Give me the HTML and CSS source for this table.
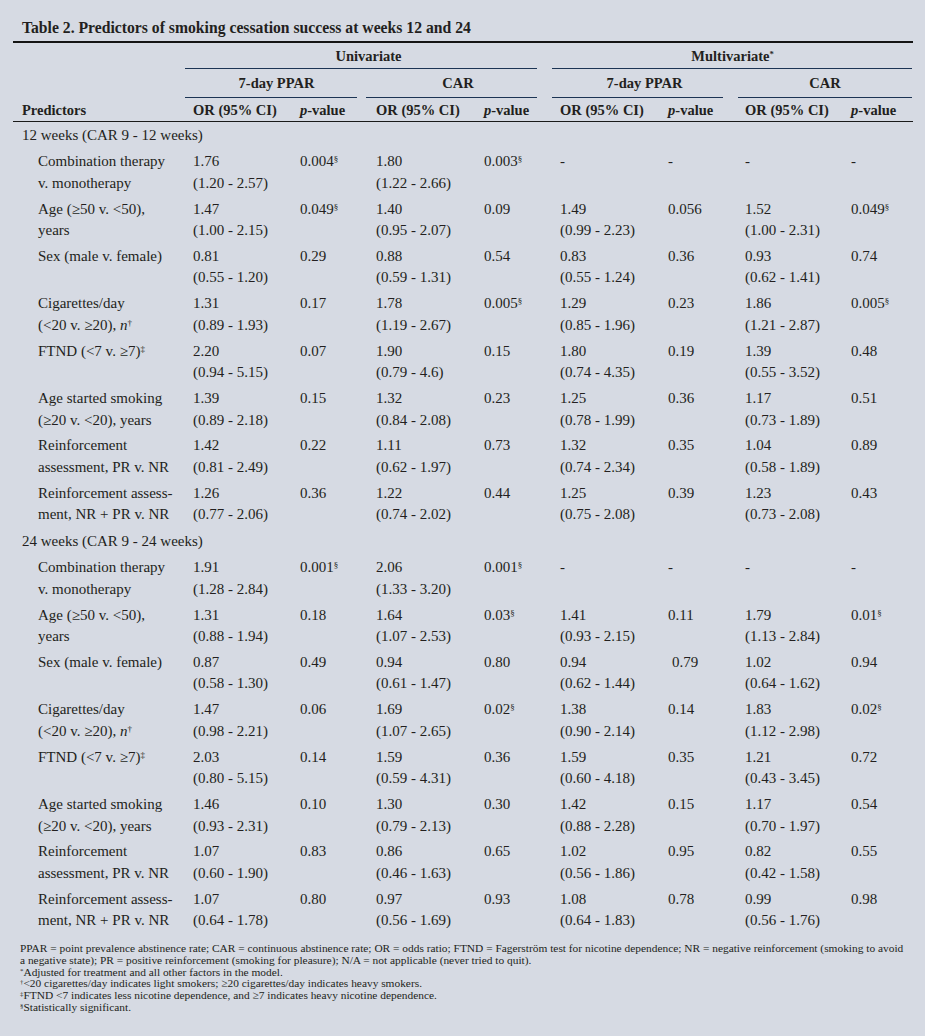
FILE: index.html
```html
<!DOCTYPE html>
<html lang="en">
<head>
<meta charset="utf-8">
<title>Table 2. Predictors of smoking cessation success</title>
<link rel="stylesheet" href="styles.css">
</head>
<body>
<div class="sheet">
  <div class="title">Table 2. Predictors of smoking cessation success at weeks 12 and 24</div>
  <table class="data">
    <colgroup>
      <col class="c-label">
      <col class="c-or1"><col class="c-p1">
      <col class="c-or2"><col class="c-p2">
      <col class="c-or3"><col class="c-p3">
      <col class="c-or4"><col class="c-p4">
    </colgroup>
    <thead>
      <tr class="h-top">
        <th></th>
        <th colspan="4"><div class="grp g-uni">Univariate</div></th>
        <th colspan="4"><div class="grp g-multi">Multivariate<sup>*</sup></div></th>
      </tr>
      <tr class="h-mid">
        <th></th>
        <th colspan="2"><div class="grp g-a">7-day PPAR</div></th>
        <th colspan="2"><div class="grp g-b">CAR</div></th>
        <th colspan="2"><div class="grp g-c">7-day PPAR</div></th>
        <th colspan="2"><div class="grp g-d">CAR</div></th>
      </tr>
      <tr class="h-cols">
        <th class="pred">Predictors</th>
        <th>OR (95% CI)</th><th><i>p</i>-value</th>
        <th>OR (95% CI)</th><th><i>p</i>-value</th>
        <th>OR (95% CI)</th><th><i>p</i>-value</th>
        <th>OR (95% CI)</th><th><i>p</i>-value</th>
      </tr>
    </thead>
    <tbody>
      <tr class="section"><td colspan="9">12 weeks (CAR 9 - 12 weeks)</td></tr>
      <tr>
        <td class="label">Combination therapy<br>v. monotherapy</td>
        <td>1.76<br>(1.20 - 2.57)</td><td>0.004<sup>§</sup></td>
        <td>1.80<br>(1.22 - 2.66)</td><td>0.003<sup>§</sup></td>
        <td>-</td><td>-</td><td>-</td><td>-</td>
      </tr>
      <tr>
        <td class="label">Age (≥50 v. &lt;50),<br>years</td>
        <td>1.47<br>(1.00 - 2.15)</td><td>0.049<sup>§</sup></td>
        <td>1.40<br>(0.95 - 2.07)</td><td>0.09</td>
        <td>1.49<br>(0.99 - 2.23)</td><td>0.056</td>
        <td>1.52<br>(1.00 - 2.31)</td><td>0.049<sup>§</sup></td>
      </tr>
      <tr>
        <td class="label">Sex (male v. female)</td>
        <td>0.81<br>(0.55 - 1.20)</td><td>0.29</td>
        <td>0.88<br>(0.59 - 1.31)</td><td>0.54</td>
        <td>0.83<br>(0.55 - 1.24)</td><td>0.36</td>
        <td>0.93<br>(0.62 - 1.41)</td><td>0.74</td>
      </tr>
      <tr>
        <td class="label">Cigarettes/day<br>(&lt;20 v. ≥20), <i>n</i><sup>†</sup></td>
        <td>1.31<br>(0.89 - 1.93)</td><td>0.17</td>
        <td>1.78<br>(1.19 - 2.67)</td><td>0.005<sup>§</sup></td>
        <td>1.29<br>(0.85 - 1.96)</td><td>0.23</td>
        <td>1.86<br>(1.21 - 2.87)</td><td>0.005<sup>§</sup></td>
      </tr>
      <tr>
        <td class="label">FTND (&lt;7 v. ≥7)<sup>‡</sup></td>
        <td>2.20<br>(0.94 - 5.15)</td><td>0.07</td>
        <td>1.90<br>(0.79 - 4.6)</td><td>0.15</td>
        <td>1.80<br>(0.74 - 4.35)</td><td>0.19</td>
        <td>1.39<br>(0.55 - 3.52)</td><td>0.48</td>
      </tr>
      <tr>
        <td class="label">Age started smoking<br>(≥20 v. &lt;20), years</td>
        <td>1.39<br>(0.89 - 2.18)</td><td>0.15</td>
        <td>1.32<br>(0.84 - 2.08)</td><td>0.23</td>
        <td>1.25<br>(0.78 - 1.99)</td><td>0.36</td>
        <td>1.17<br>(0.73 - 1.89)</td><td>0.51</td>
      </tr>
      <tr>
        <td class="label">Reinforcement<br>assessment, PR v. NR</td>
        <td>1.42<br>(0.81 - 2.49)</td><td>0.22</td>
        <td>1.11<br>(0.62 - 1.97)</td><td>0.73</td>
        <td>1.32<br>(0.74 - 2.34)</td><td>0.35</td>
        <td>1.04<br>(0.58 - 1.89)</td><td>0.89</td>
      </tr>
      <tr>
        <td class="label">Reinforcement assess-<br>ment, NR + PR v. NR</td>
        <td>1.26<br>(0.77 - 2.06)</td><td>0.36</td>
        <td>1.22<br>(0.74 - 2.02)</td><td>0.44</td>
        <td>1.25<br>(0.75 - 2.08)</td><td>0.39</td>
        <td>1.23<br>(0.73 - 2.08)</td><td>0.43</td>
      </tr>
      <tr class="section"><td colspan="9">24 weeks (CAR 9 - 24 weeks)</td></tr>
      <tr>
        <td class="label">Combination therapy<br>v. monotherapy</td>
        <td>1.91<br>(1.28 - 2.84)</td><td>0.001<sup>§</sup></td>
        <td>2.06<br>(1.33 - 3.20)</td><td>0.001<sup>§</sup></td>
        <td>-</td><td>-</td><td>-</td><td>-</td>
      </tr>
      <tr>
        <td class="label">Age (≥50 v. &lt;50),<br>years</td>
        <td>1.31<br>(0.88 - 1.94)</td><td>0.18</td>
        <td>1.64<br>(1.07 - 2.53)</td><td>0.03<sup>§</sup></td>
        <td>1.41<br>(0.93 - 2.15)</td><td>0.11</td>
        <td>1.79<br>(1.13 - 2.84)</td><td>0.01<sup>§</sup></td>
      </tr>
      <tr>
        <td class="label">Sex (male v. female)</td>
        <td>0.87<br>(0.58 - 1.30)</td><td>0.49</td>
        <td>0.94<br>(0.61 - 1.47)</td><td>0.80</td>
        <td>0.94<br>(0.62 - 1.44)</td><td class="nudge">0.79</td>
        <td>1.02<br>(0.64 - 1.62)</td><td>0.94</td>
      </tr>
      <tr>
        <td class="label">Cigarettes/day<br>(&lt;20 v. ≥20), <i>n</i><sup>†</sup></td>
        <td>1.47<br>(0.98 - 2.21)</td><td>0.06</td>
        <td>1.69<br>(1.07 - 2.65)</td><td>0.02<sup>§</sup></td>
        <td>1.38<br>(0.90 - 2.14)</td><td>0.14</td>
        <td>1.83<br>(1.12 - 2.98)</td><td>0.02<sup>§</sup></td>
      </tr>
      <tr>
        <td class="label">FTND (&lt;7 v. ≥7)<sup>‡</sup></td>
        <td>2.03<br>(0.80 - 5.15)</td><td>0.14</td>
        <td>1.59<br>(0.59 - 4.31)</td><td>0.36</td>
        <td>1.59<br>(0.60 - 4.18)</td><td>0.35</td>
        <td>1.21<br>(0.43 - 3.45)</td><td>0.72</td>
      </tr>
      <tr>
        <td class="label">Age started smoking<br>(≥20 v. &lt;20), years</td>
        <td>1.46<br>(0.93 - 2.31)</td><td>0.10</td>
        <td>1.30<br>(0.79 - 2.13)</td><td>0.30</td>
        <td>1.42<br>(0.88 - 2.28)</td><td>0.15</td>
        <td>1.17<br>(0.70 - 1.97)</td><td>0.54</td>
      </tr>
      <tr>
        <td class="label">Reinforcement<br>assessment, PR v. NR</td>
        <td>1.07<br>(0.60 - 1.90)</td><td>0.83</td>
        <td>0.86<br>(0.46 - 1.63)</td><td>0.65</td>
        <td>1.02<br>(0.56 - 1.86)</td><td>0.95</td>
        <td>0.82<br>(0.42 - 1.58)</td><td>0.55</td>
      </tr>
      <tr>
        <td class="label">Reinforcement assess-<br>ment, NR + PR v. NR</td>
        <td>1.07<br>(0.64 - 1.78)</td><td>0.80</td>
        <td>0.97<br>(0.56 - 1.69)</td><td>0.93</td>
        <td>1.08<br>(0.64 - 1.83)</td><td>0.78</td>
        <td>0.99<br>(0.56 - 1.76)</td><td>0.98</td>
      </tr>
    </tbody>
  </table>
  <div class="notes">
    <p>PPAR = point prevalence abstinence rate; CAR = continuous abstinence rate; OR = odds ratio; FTND = Fagerström test for nicotine dependence; NR = negative reinforcement (smoking to avoid<br>a negative state); PR = positive reinforcement (smoking for pleasure); N/A = not applicable (never tried to quit).</p>
    <p><sup>*</sup>Adjusted for treatment and all other factors in the model.</p>
    <p><sup>†</sup>&lt;20 cigarettes/day indicates light smokers; ≥20 cigarettes/day indicates heavy smokers.</p>
    <p><sup>‡</sup>FTND &lt;7 indicates less nicotine dependence, and ≥7 indicates heavy nicotine dependence.</p>
    <p><sup>§</sup>Statistically significant.</p>
  </div>
</div>
</body>
</html>
```

FILE: styles.css
```css
html, body {
  margin: 0;
  padding: 0;
}

body {
  background: #d6dae3;
  color: #231f20;
  font-family: "Liberation Serif", "Times New Roman", serif;
}

.sheet {
  width: 900px;
  margin-left: 13px;
}

.title {
  font-weight: bold;
  font-size: 15.7px;
  line-height: 20px;
  padding: 18px 0 3px 9px;
  border-bottom: 2.5px solid #141414;
}

.data {
  width: 900px;
  table-layout: fixed;
  border-collapse: collapse;
  font-size: 15px;
}

.c-label { width: 172px; }
.c-or1 { width: 107px; }
.c-p1 { width: 76px; }
.c-or2 { width: 108px; }
.c-p2 { width: 76px; }
.c-or3 { width: 108px; }
.c-p3 { width: 77px; }
.c-or4 { width: 106px; }
.c-p4 { width: 70px; }

.data th {
  font-weight: bold;
  font-size: 14.5px;
  line-height: 20px;
  padding: 0;
  white-space: nowrap;
}

.data th i {
  font-style: italic;
}

.h-top th {
  padding-top: 3px;
  text-align: center;
}

.h-mid th {
  padding-top: 4px;
  text-align: center;
}

.grp {
  border-bottom: 1px solid #1c3454;
}

.h-top .grp { padding-bottom: 1.5px; }
.h-mid .grp { padding-bottom: 4px; }

.g-uni { margin-right: 15px; padding-left: 15px; }
.g-multi { margin-right: 1px; padding-left: 1px; }
.g-a { margin-right: 11px; padding-left: 11px; }
.g-b { margin-left: -2px; margin-right: 15px; padding-left: 13px; }
.g-c { margin-right: 14px; padding-left: 14px; }
.g-d { margin-left: 1px; margin-right: 1px; }

.h-cols th {
  text-align: left;
  padding: 2.5px 0 1px 8px;
  border-bottom: 1px solid #1a1a1a;
}

.h-cols th.pred {
  padding-left: 9px;
}

.data td {
  line-height: 21.5px;
  padding: 2.2px 0 2.2px 8px;
  vertical-align: top;
  white-space: nowrap;
}

.data td.label {
  padding-left: 25px;
}

.data tr.section td {
  padding: 3px 0 2.5px 9px;
}

.data td.nudge {
  padding-left: 12px;
}

sup {
  font-size: 0.6em;
  line-height: 0;
  vertical-align: 0.5em;
}

.notes {
  margin-top: 9px;
  padding-left: 7px;
  font-size: 11.4px;
  line-height: 11.8px;
}

.notes p {
  margin: 0;
}
```
